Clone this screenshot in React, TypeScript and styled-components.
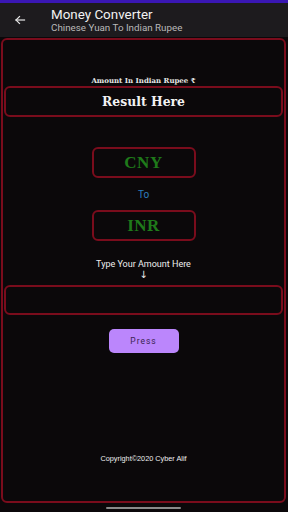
import React from "react";
import styled, { createGlobalStyle } from "styled-components";

const Global = createGlobalStyle`
  html, body { margin: 0; padding: 0; background: #0b080a; }
  body { width: 288px; height: 512px; overflow: hidden; font-family: "Roboto", "Liberation Sans", sans-serif; }
`;

const Screen = styled.div`
  width: 288px;
  height: 512px;
  display: flex;
  flex-direction: column;
  background: #0b080a;
`;

const StatusBar = styled.div`
  height: 3px;
  background: #3a17b4;
`;

const AppBar = styled.div`
  height: 34px;
  background: #1d1b1e;
  display: flex;
  align-items: center;
`;

const BackBtn = styled.div`
  width: 40px;
  display: flex;
  justify-content: center;
  color: #e6e6e6;
`;

const Titles = styled.div`
  display: flex;
  flex-direction: column;
  margin-left: 11px;
  margin-top: -1px;
`;

const Title = styled.div`
  font-family: "Roboto", sans-serif;
  font-size: 13.4px;
  color: #f2f2f2;
  line-height: 15px;
`;

const Subtitle = styled.div`
  font-family: "Roboto", sans-serif;
  font-size: 9.8px;
  color: #b9b9b9;
  line-height: 11px;
`;

const Card = styled.div`
  margin: 1px 2px 0 1px;
  height: 461px;
  border: 2px solid #7a0c1c;
  border-radius: 6px;
  display: flex;
  flex-direction: column;
  align-items: center;
  background: #0b080a;
  padding: 0 1px;
`;

const Label = styled.div`
  margin-top: 36px;
  font-family: "DejaVu Serif", "Liberation Serif", serif;
  font-weight: bold;
  font-size: 7px;
  color: #e8e8e8;
  height: 10px;
  line-height: 10px;
`;

const Box = styled.div<{ $w?: string; $h: number }>`
  box-sizing: border-box;
  width: ${(p) => p.$w ?? "100%"};
  height: ${(p) => p.$h}px;
  border: 2px solid #7a0c1c;
  border-radius: 6px;
  display: flex;
  align-items: center;
  justify-content: center;
`;

const ResultText = styled.div`
  font-family: "DejaVu Serif", "Liberation Serif", serif;
  font-weight: bold;
  font-size: 12.4px;
  color: #f2f2f2;
`;

const Code = styled.div`
  font-family: "Liberation Serif", "DejaVu Serif", serif;
  font-weight: bold;
  font-size: 17px;
  color: #1f7a1a;
  letter-spacing: 0.5px;
`;

const To = styled.div`
  font-family: "Roboto", sans-serif;
  font-size: 10px;
  color: #2d7fbf;
  height: 32px;
  display: flex;
  align-items: center;
`;

const TypeLabel = styled.div`
  margin-top: 18px;
  font-family: "Roboto", sans-serif;
  font-size: 9px;
  color: #eeeeee;
  text-align: center;
  line-height: 11px;
`;

const Arrow = styled.div`
  font-family: "DejaVu Sans", sans-serif;
  font-size: 10px;
  color: #eeeeee;
  text-align: center;
  line-height: 10px;
  margin-bottom: 5px;
`;

const Button = styled.button`
  margin-top: 14px;
  width: 70px;
  height: 24px;
  border: none;
  border-radius: 5px;
  background: #bb86fc;
  color: #3a2450;
  font-family: "Roboto", sans-serif;
  font-size: 8.5px;
  letter-spacing: 1px;
  padding: 0;
`;

const Spacer = styled.div`
  flex: 1;
`;

const Copyright = styled.div`
  font-family: "Liberation Sans", Arial, sans-serif;
  font-size: 7.3px;
  color: #eeeeee;
  margin-bottom: 38px;
`;

const NavArea = styled.div`
  flex: 1;
  display: flex;
  justify-content: center;
  align-items: center;
`;

const Handle = styled.div`
  width: 75px;
  height: 2px;
  border-radius: 1px;
  background: #8a8a8a;
  margin-left: -1px;
  margin-top: 1px;
`;

export default function App() {
  return (
    <Screen>
      <Global />
      <StatusBar />
      <AppBar>
        <BackBtn>
          <svg width="12" height="12" viewBox="0 0 24 24" fill="none" stroke="#e6e6e6" strokeWidth="2.4" strokeLinecap="square">
            <path d="M21 12H4" />
            <path d="M11 5l-7 7 7 7" />
          </svg>
        </BackBtn>
        <Titles>
          <Title>Money Converter</Title>
          <Subtitle>Chinese Yuan To Indian Rupee</Subtitle>
        </Titles>
      </AppBar>
      <Card>
        <Label>Amount In Indian Rupee ₹</Label>
        <Box $h={31}>
          <ResultText>Result Here</ResultText>
        </Box>
        <div style={{ height: 30 }} />
        <Box $w="104px" $h={31}>
          <Code>CNY</Code>
        </Box>
        <To>To</To>
        <Box $w="104px" $h={31}>
          <Code>INR</Code>
        </Box>
        <TypeLabel>Type Your Amount Here</TypeLabel>
        <Arrow>↓</Arrow>
        <Box $h={30} />
        <Button>Press</Button>
        <Spacer />
        <Copyright>Copyright©2020 Cyber Alif</Copyright>
      </Card>
      <NavArea>
        <Handle />
      </NavArea>
    </Screen>
  );
}
